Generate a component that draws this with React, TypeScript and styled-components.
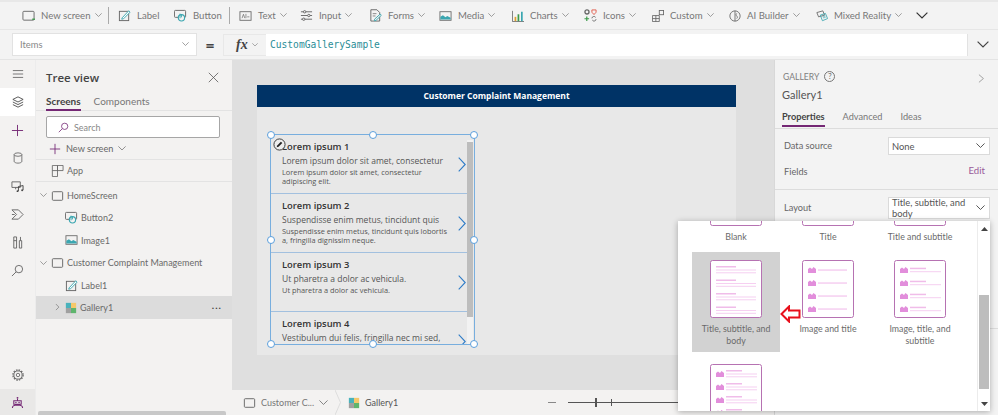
import React from "react";
import styled, { createGlobalStyle } from "styled-components";

const GlobalStyle = createGlobalStyle`
  html, body {
    margin: 0;
    padding: 0;
    background: #f3f2f1;
  }
  * {
    box-sizing: border-box;
  }
`;

const Icon = ({ size = 13, w, h, children }: { size?: number; w?: number; h?: number; children: React.ReactNode }) => (
  <svg width={w ?? size} height={h ?? size} viewBox="0 0 14 14" fill="none" strokeWidth="1" style={{ flex: "none", display: "block" }}>
    {children}
  </svg>
);

const GREY = "#666";
const TEAL = "#3aa6b0";

const Chevron = ({ size = 7, color = "#777" }: { size?: number; color?: string }) => (
  <svg width={size} height={size * 0.6} viewBox="0 0 10 6" fill="none" style={{ flex: "none", display: "block" }}>
    <path d="M.5.5 5 5 9.5.5" stroke={color} strokeWidth="1" />
  </svg>
);

const ScreenIcon = () => (
  <Icon w={13} h={12}>
    <rect x="1" y="2" width="12" height="10" rx="1" stroke={GREY} strokeWidth="1.1" />
  </Icon>
);
const NewScreenIcon = () => (
  <Icon>
    <rect x="1" y="2.5" width="12" height="9.5" rx="1" stroke={GREY} />
    <path d="M11 11h3" stroke="#3c9a4a" strokeWidth="1.4" />
  </Icon>
);
const LabelIcon = () => (
  <Icon>
    <rect x="1.5" y="2.5" width="10" height="10" stroke={GREY} />
    <path d="M4.5 9.5 11.5 2l1.5 1.4L6 10.5l-2 .5z" fill="#fff" stroke={TEAL} />
  </Icon>
);
const ButtonIcon = () => (
  <Icon>
    <rect x=".5" y="1.5" width="12" height="7.5" rx="1" stroke={GREY} />
    <circle cx="8" cy="9.5" r="3.4" fill="#f3f2f1" stroke={TEAL} strokeWidth="1.2" />
    <path d="M6.5 5v5M8 6v3" stroke={TEAL} />
  </Icon>
);
const TextIcon = () => (
  <Icon w={13} h={12}>
    <rect x=".5" y="2" width="13" height="10" stroke={GREY} />
    <path d="M3 9.5 4.6 5l1.6 4.5M7.5 9.5v-5M9 8h2.5" stroke={GREY} strokeWidth=".8" />
  </Icon>
);
const InputIcon = () => (
  <Icon>
    <path d="M1 3h12M1 7h12M1 11h12" stroke={GREY} />
    <circle cx="5" cy="3" r="1.3" fill="#f3f2f1" stroke={GREY} />
    <circle cx="9.5" cy="7" r="1.3" fill="#f3f2f1" stroke={GREY} />
    <circle cx="4" cy="11" r="1.3" fill="#f3f2f1" stroke={GREY} />
  </Icon>
);
const FormsIcon = () => (
  <Icon>
    <path d="M2 .8h6.5l3 3V13H2z" stroke={GREY} />
    <path d="M4 5h4M4 7.5h3" stroke={GREY} strokeWidth=".8" />
    <path d="m6 11 6-5.5 1.3 1.3L7.5 12.3l-1.7.3z" fill="#f3f2f1" stroke={TEAL} />
  </Icon>
);
const MediaIcon = () => (
  <Icon w={13} h={12}>
    <rect x=".5" y="2" width="13" height="10" stroke={GREY} />
    <path d="M1 11V8l3-2 3 2.5 2-1.5 4 2v2z" fill={TEAL} />
  </Icon>
);
const ChartsIcon = () => (
  <Icon w={12} h={12}>
    <path d="M.5 1v12.500H14" stroke={GREY} />
    <path d="M3 8h2v5H3z" fill="#e0a030" />
    <path d="M6.5 5h2v8h-2z" fill="#3c9a4a" />
    <path d="M10.5 2h2v11h-2z" fill={TEAL} />
  </Icon>
);
const IconsIcon = () => (
  <Icon>
    <circle cx="3.2" cy="3.2" r="2.2" stroke={GREY} strokeWidth="1.4" />
    <path d="M8.5 1h4.500v2.500L10.800 6 8.500 3.500z" stroke="#e25b4b" />
    <path d="M3 8v5M.5 10.500h5" stroke="#3c9a4a" strokeWidth="1.3" />
    <path d="M8.500 10a2.200 2.200 0 0 1 4-1M13 11a2.200 2.200 0 0 1-4 1" stroke={GREY} />
  </Icon>
);
const CustomIcon = () => (
  <Icon w={12} h={12}>
    <path d="M.5 6.500h8v7h-8zM4.500 6.500v7M.5 10h8" stroke={GREY} />
    <rect x="8.500" y=".5" width="5" height="5" stroke={GREY} />
  </Icon>
);
const AppIcon = () => (
  <Icon w={13} h={12}>
    <path d="M1 .5h6v13H1zM7 .5h6.500v6H7zM1 6.500h6" stroke={GREY} />
  </Icon>
);
const BrainIcon = () => (
  <Icon w={12} h={12}>
    <circle cx="7" cy="7" r="6" stroke={GREY} />
    <path d="M7 1v12M9 4c-1 1-1 2 0 3s1 2 0 3" stroke={GREY} />
  </Icon>
);
const MixedIcon = () => (
  <Icon w={12} h={12}>
    <path d="m1 3 7-2 2 5-7 2z" stroke={GREY} />
    <path d="m5 6 6-2 2.500 6-6 2.500z" stroke={TEAL} />
    <path d="M7.500 7l3-1 1 3-3 1z" fill={TEAL} opacity=".5" />
  </Icon>
);
const GalleryIcon = () => (
  <Icon w={12} h={12}>
    <rect x="1" y="1" width="6" height="6" fill="#49b2bc" />
    <rect x="7" y="1" width="6" height="6" fill="#f5c86a" />
    <rect x="1" y="7" width="6" height="6" fill="#a0a0a0" />
    <rect x="7" y="7" width="6" height="6" fill="#5fb56d" />
  </Icon>
);

const tools = [
  { name: "New screen", icon: <NewScreenIcon />, chev: true, width: 86, sep: true },
  { name: "Label", icon: <LabelIcon />, width: 56 },
  { name: "Button", icon: <ButtonIcon />, width: 55, sep: true },
  { name: "Text", icon: <TextIcon />, chev: true, width: 61 },
  { name: "Input", icon: <InputIcon />, chev: true, width: 69 },
  { name: "Forms", icon: <FormsIcon />, chev: true, width: 70 },
  { name: "Media", icon: <MediaIcon />, chev: true, width: 73 },
  { name: "Charts", icon: <ChartsIcon />, chev: true, width: 72 },
  { name: "Icons", icon: <IconsIcon />, chev: true, width: 68 },
  { name: "Custom", icon: <CustomIcon />, chev: true, width: 77 },
  { name: "AI Builder", icon: <BrainIcon />, chev: true, width: 87 },
  { name: "Mixed Reality", icon: <MixedIcon />, chev: true, width: 100 },
];

const treeRows = [
  { name: "HomeScreen", level: 0, icon: <ScreenIcon />, open: true },
  { name: "Button2", level: 1, icon: <ButtonIcon /> },
  { name: "Image1", level: 1, icon: <MediaIcon /> },
  { name: "Customer Complaint Management", level: 0, icon: <ScreenIcon />, open: true },
  { name: "Label1", level: 1, icon: <LabelIcon /> },
];

const galleryRows = [
  { title: "Lorem ipsum 1", sub: "Lorem ipsum dolor sit amet, consectetur", body: "Lorem ipsum dolor sit amet, consectetur adipiscing elit." },
  { title: "Lorem ipsum 2", sub: "Suspendisse enim metus, tincidunt quis", body: "Suspendisse enim metus, tincidunt quis lobortis a, fringilla dignissim neque." },
  { title: "Lorem ipsum 3", sub: "Ut pharetra a dolor ac vehicula.", body: "Ut pharetra a dolor ac vehicula." },
  { title: "Lorem ipsum 4", sub: "Vestibulum dui felis, fringilla nec mi sed,", body: "" },
];

const handles = [
  [0, 0], [50, 0], [100, 0],
  [0, 50], [100, 50],
  [0, 100], [50, 100], [100, 100],
];

const Page = styled.div`
  position: relative;
  width: 998px;
  height: 415px;
  overflow: hidden;
  background: #f3f2f1;
  border-top: 2px solid #e8e8e8;
  font-family: Lato, "Open Sans", sans-serif;
  color: #555;
`;

const Toolbar = styled.div`
  display: flex;
  align-items: center;
  height: 28px;
  padding-left: 22px;
  background: #f3f3f3;
  border-bottom: 1px solid #e6e6e6;
`;

const Tool = styled.div<{ $w: number }>`
  display: flex;
  align-items: center;
  gap: 6px;
  width: ${(p) => p.$w}px;
  flex: none;
  font-size: 9.6px;
  color: #777;
  white-space: nowrap;
`;

const ToolSep = styled.div`
  width: 1px;
  height: 17px;
  background: #aaa;
  margin-right: 9px;
  flex: none;
`;

const ToolChev = styled.span`
  margin-left: -2px;
`;

const FormulaBar = styled.div`
  display: flex;
  align-items: center;
  height: 30px;
  padding: 4px 0 4px 12px;
  background: #f3f3f3;
  border-bottom: 1px solid #e4e4e4;
`;

const PropSelect = styled.div`
  display: flex;
  align-items: center;
  justify-content: space-between;
  width: 185px;
  height: 23px;
  padding: 0 7px;
  background: #fff;
  border: 1px solid #e2e2e2;
  font-size: 9.4px;
  color: #888;
`;

const Equals = styled.div`
  width: 26px;
  text-align: center;
  font-family: "Open Sans", sans-serif;
  font-size: 15px;
  font-weight: 700;
  color: #444;
`;

const FxBox = styled.div`
  display: flex;
  align-items: center;
  gap: 4px;
  width: 43px;
  height: 22px;
  padding-left: 12px;
  font-family: "Liberation Serif", serif;
  font-style: italic;
  font-weight: 700;
  font-size: 14px;
  color: #444;
  border: 1px solid #e8e8e8;
  border-right: 0;
`;

const FormulaInput = styled.div`
  width: 702px;
  height: 22px;
  padding-left: 4px;
  background: #fff;
  border-right: 1px solid #e2e2e2;
  font-family: "DejaVu Sans Mono", monospace;
  font-size: 9.6px;
  line-height: 22px;
  color: #2a8d96;
`;

const FormulaChev = styled.div`
  margin-left: 9px;
`;

const Body = styled.div`
  display: grid;
  grid-template-columns: 35px 197px 542px 224px;
  height: 355px;
`;

const Rail = styled.nav`
  display: flex;
  flex-direction: column;
  background: #f3f2f1;
`;

const RailItem = styled.div<{ $active?: boolean; $dim?: boolean }>`
  display: flex;
  align-items: center;
  justify-content: center;
  height: ${(p) => (p.$dim ? 26 : 28)}px;
  flex: none;
  background: ${(p) => (p.$active ? "#fff" : p.$dim ? "#e9e8e7" : "transparent")};
`;

const RailSpacer = styled.div`
  flex: 1;
`;

const TreePanel = styled.aside`
  position: relative;
  display: flex;
  flex-direction: column;
  background: #f3f2f1;
  border-left: 1px solid #ececec;
`;

const TreeHead = styled.div`
  display: flex;
  align-items: center;
  justify-content: space-between;
  height: 34px;
  padding: 2px 13px 2px 10px;
  font-family: "Open Sans", sans-serif;
  font-size: 11.5px;
  font-weight: 600;
  color: #444;
`;

const Tabs = styled.div`
  display: flex;
  gap: 13px;
  height: 17px;
  padding-left: 10px;
  border-bottom: 1px solid #e3e3e3;
  font-size: 10px;
`;

const TabItem = styled.div<{ $active?: boolean }>`
  height: 17px;
  line-height: 14px;
  font-weight: ${(p) => (p.$active ? 700 : 400)};
  color: ${(p) => (p.$active ? "#444" : "#777")};
  border-bottom: ${(p) => (p.$active ? "2px solid #742774" : "0")};
`;

const SearchBox = styled.div`
  display: flex;
  align-items: center;
  gap: 5px;
  height: 22px;
  margin: 5px 12px 0 10px;
  padding-left: 11px;
  background: #fff;
  border: 1px solid #a6a6a6;
  border-radius: 2px;
  font-size: 9px;
  color: #888;
`;

const NewScreenRow = styled.div`
  display: flex;
  align-items: center;
  gap: 5px;
  height: 22px;
  padding-left: 13px;
  border-bottom: 1px solid #e3e3e3;
  font-size: 9.2px;
  color: #666;
`;

const TreeRow = styled.div<{ $level?: number; $selected?: boolean; $line?: boolean }>`
  display: flex;
  align-items: center;
  gap: 3px;
  height: 22.4px;
  flex: none;
  padding-left: ${(p) => 15 + (p.$level ?? 0) * 14}px;
  margin-bottom: ${(p) => (p.$line ? 2 : 0)}px;
  font-size: 9px;
  color: #6a6a6a;
  white-space: nowrap;
  background: ${(p) => (p.$selected ? "#dcdcdc" : "transparent")};
  border-bottom: ${(p) => (p.$line ? "1px solid #e3e3e3" : "0")};
`;

const TreeCaret = styled.span<{ $side?: boolean }>`
  width: 7px;
  margin: 0 1px 0 -11px;
  transform: ${(p) => (p.$side ? "rotate(-90deg)" : "none")};
`;

const MoreDots = styled.span`
  margin-left: auto;
  margin-right: 10px;
  font-size: 10px;
  font-weight: 700;
  letter-spacing: 1px;
  color: #444;
  line-height: 6px;
  padding-bottom: 5px;
`;

const HScroll = styled.div`
  position: absolute;
  left: 2px;
  bottom: 0;
  width: 188px;
  height: 4px;
  background: #c8c8c8;
  border-radius: 2px 2px 0 0;
`;

const Canvas = styled.main`
  display: flex;
  flex-direction: column;
  background: #dfdfdf;
`;

const CanvasArea = styled.div`
  flex: 1;
  padding: 25px 38px 0 25px;
`;

const AppScreen = styled.div`
  height: 270px;
  font-family: "Open Sans", sans-serif;
  background: #e8e8e8;
`;

const ScreenHeader = styled.div`
  height: 22px;
  line-height: 22px;
  text-align: center;
  background: #003366;
  color: #fff;
  font-size: 8.5px;
  font-weight: 700;
`;

const Gallery = styled.div`
  position: relative;
  width: 205px;
  height: 211px;
  margin: 27px 0 0 13px;
  border: 1px solid #78aede;
`;

const GalleryClip = styled.div`
  height: 100%;
  overflow: hidden;
`;

const GalleryRow = styled.div`
  position: relative;
  height: 59px;
  padding: 5px 26px 0 11px;
  border-bottom: 1px solid #a2c0df;
  margin-right: 5px;
`;

const RowTitle = styled.div`
  font-size: 9.4px;
  line-height: 14px;
  font-weight: 600;
  color: #333;
  white-space: nowrap;
`;

const RowSub = styled.div`
  font-size: 8.5px;
  line-height: 13px;
  color: #555;
  white-space: nowrap;
`;

const RowBody = styled.div`
  margin-top: 1px;
  margin-right: -9px;
  font-size: 7.4px;
  line-height: 9px;
  color: #555;
`;

const RowArrow = styled.svg`
  position: absolute;
  right: 3px;
  top: 22px;
`;

const GalleryTrack = styled.div`
  position: absolute;
  top: 5px;
  right: 1px;
  width: 6px;
  height: 204px;
  background: #f2f2f2;
`;

const GalleryThumb = styled.div`
  height: 175px;
  margin-top: 2px;
  background: #bdbdbd;
`;

const Handle = styled.span`
  position: absolute;
  width: 8px;
  height: 8px;
  margin: -4px 0 0 -4px;
  background: #fff;
  border: 1px solid #5c9fdc;
  border-radius: 50%;
`;

const EditBadge = styled.div`
  position: absolute;
  left: 2px;
  top: 3px;
`;

const StatusBar = styled.footer`
  display: flex;
  align-items: center;
  height: 25px;
  padding-left: 11px;
  background: #f3f2f1;
  font-size: 9px;
  color: #777;
  white-space: nowrap;
`;

const Crumb = styled.div<{ $w: number; $dark?: boolean }>`
  display: flex;
  align-items: center;
  gap: 5px;
  width: ${(p) => p.$w}px;
  flex: none;
  color: ${(p) => (p.$dark ? "#555" : "#777")};
`;

const CrumbDivider = styled.svg`
  flex: none;
  margin-right: 7px;
`;

const ZoomMinus = styled.div`
  width: 8px;
  height: 1px;
  margin: 0 12px 0 154px;
  background: #888;
  flex: none;
`;

const ZoomTrack = styled.div`
  position: relative;
  flex: 1;
  height: 1px;
  background: #555;
`;

const ZoomMark = styled.span<{ $at: number; $tall?: boolean }>`
  position: absolute;
  left: ${(p) => p.$at}px;
  top: ${(p) => (p.$tall ? -4 : -3)}px;
  width: ${(p) => (p.$tall ? 2 : 1)}px;
  height: ${(p) => (p.$tall ? 9 : 7)}px;
  background: #555;
`;

const RightPanel = styled.aside`
  display: flex;
  flex-direction: column;
  background: #f3f3f3;
  border-left: 1px solid #d8d8d8;
`;

const PanelKind = styled.div`
  display: flex;
  align-items: center;
  gap: 5px;
  height: 24px;
  padding: 9px 12px 0 8px;
  font-size: 8.6px;
  color: #808080;
`;

const HelpMark = styled.span`
  display: flex;
  align-items: center;
  justify-content: center;
  width: 11px;
  height: 11px;
  border: 1px solid #777;
  border-radius: 50%;
  font-size: 7.5px;
  color: #666;
`;

const PanelChev = styled.span`
  margin-left: auto;
  margin-top: 4px;
`;

const PanelName = styled.div`
  height: 22px;
  line-height: 22px;
  padding: 0 7px;
  font-size: 11px;
  color: #555;
`;

const PanelTabs = styled.div`
  display: flex;
  gap: 18px;
  height: 23px;
  padding: 4px 0 0 7px;
  border-bottom: 1px solid #dcdcdc;
  font-size: 9.2px;
`;

const Section = styled.div<{ $line?: boolean }>`
  display: grid;
  grid-template-columns: 104px 102px;
  align-items: center;
  padding-left: 9px;
  border-bottom: ${(p) => (p.$line ? "1px solid #dcdcdc" : "0")};
  font-size: 9.2px;
  color: #666;
`;

const FieldLabel = styled.div<{ $h: number }>`
  height: ${(p) => p.$h}px;
  line-height: ${(p) => p.$h}px;
`;

const FieldSelect = styled.div<{ $tall?: boolean }>`
  display: flex;
  align-items: center;
  justify-content: space-between;
  height: ${(p) => (p.$tall ? 22 : 18)}px;
  padding: 0 4px 0 3px;
  background: #fff;
  border: 1px solid #dadada;
  font-size: 9.4px;
  line-height: 11px;
  color: #555;

  span {
    width: 76px;
  }
`;

const EditLink = styled.div`
  padding-right: 5px;
  text-align: right;
  margin-top: -3px;
  font-size: 9.6px;
  color: #9a5a9a;
`;

const LayoutPopup = styled.div`
  position: absolute;
  left: 678px;
  top: 219px;
  width: 312px;
  height: 190px;
  overflow: hidden;
  background: #fff;
  box-shadow: 0 1px 6px rgba(0, 0, 0, 0.3);
`;

const LayoutGrid = styled.div`
  display: grid;
  grid-template-columns: 88px 96px 88px;
  grid-template-rows: 92px 104px 100px;
  margin: -61px 0 0 14px;
`;

const LayoutCell = styled.div<{ $selected?: boolean }>`
  display: flex;
  flex-direction: column;
  align-items: center;
  height: 100px;
  padding-top: 8px;
  text-align: center;
  font-size: 8.8px;
  line-height: 11.5px;
  color: #6a6a6a;
  background: ${(p) => (p.$selected ? "#d2d2d2" : "transparent")};
`;

const LayoutName = styled.div`
  margin-top: 4px;
  padding: 0 6px;
`;

const PopupScroll = styled.div`
  position: absolute;
  top: 0;
  right: 0;
  width: 13px;
  height: 100%;
  border-left: 1px solid #ececec;
`;

const PopupThumb = styled.div`
  position: absolute;
  left: 1px;
  right: 1px;
  top: 74px;
  height: 94px;
  background: #bdbdbd;
`;

const ScrollArrow = styled.svg<{ $down?: boolean }>`
  position: absolute;
  left: 3px;
  ${(p) => (p.$down ? "bottom: 5px;" : "top: 6px;")}
`;

const RedArrow = styled.svg`
  position: absolute;
  left: 102px;
  top: 84px;
`;

const PINK = "#f6cff1";
const THUMB_EDGE = "#b672b2";

const LayoutThumb = ({ image, title, sub, body }: { image?: boolean; title?: boolean; sub?: boolean; body?: boolean }) => {
  const rows = [0, 1, 2, 3];
  const pitch = body && !image ? 13.5 : 13;
  const left = image ? 16 : 6;
  const titleDrop = body ? 0 : sub ? 1.7 : 3.3;
  return (
    <svg width="52" height="59" viewBox="0 0 52 59" style={{ flex: "none", display: "block" }}>
      <rect x=".5" y=".5" width="51" height="57" rx="2" fill="#fff" stroke={THUMB_EDGE} />
      {rows.map((i) => {
        const y = 6 + i * pitch;
        return (
          <g key={i}>
            {image && <path d={`M6 ${y + 7}v-4l2-1.500 2 1.500 1.500-2 2.500 2v4z`} fill="#e28edb" />}
            {title && <rect x={left} y={y + titleDrop} width={sub ? (image ? 16 : 20) : 29} height="1.500" fill={sub ? "#f0bce9" : PINK} />}
            {sub && <rect x={left} y={y + titleDrop + 3.5} width={image ? 31 : 40} height="1" fill={PINK} />}
            {body && <rect x={left} y={y + 6.3} width={image ? 31 : 40} height="1" fill={PINK} />}
          </g>
        );
      })}
    </svg>
  );
};

const layouts = [
  { name: "Blank", thumb: <LayoutThumb /> },
  { name: "Title", thumb: <LayoutThumb title /> },
  { name: "Title and subtitle", thumb: <LayoutThumb title sub /> },
  { name: "Title, subtitle, and body", thumb: <LayoutThumb title sub body />, selected: true },
  { name: "Image and title", thumb: <LayoutThumb image title /> },
  { name: "Image, title, and subtitle", thumb: <LayoutThumb image title sub /> },
  { name: "", thumb: <LayoutThumb image title sub body /> },
];

export default function App() {
  return (
    <Page>
      <GlobalStyle />
      <Toolbar>
        {tools.map((t) => (
          <React.Fragment key={t.name}>
            <Tool $w={t.width}>
              {t.icon}
              {t.name}
              {t.chev && (
                <ToolChev>
                  <Chevron />
                </ToolChev>
              )}
            </Tool>
            {t.sep && <ToolSep />}
          </React.Fragment>
        ))}
        <Chevron size={12} color="#333" />
      </Toolbar>

      <FormulaBar>
        <PropSelect>
          Items
          <Chevron />
        </PropSelect>
        <Equals>=</Equals>
        <FxBox>
          fx
          <Chevron size={6} />
        </FxBox>
        <FormulaInput>CustomGallerySample</FormulaInput>
        <FormulaChev>
          <Chevron size={12} color="#444" />
        </FormulaChev>
      </FormulaBar>

      <Body>
        <Rail>
          <RailItem>
            <Icon size={12}>
              <path d="M1 3h12M1 7h12M1 11h12" stroke={GREY} />
            </Icon>
          </RailItem>
          <RailItem $active>
            <Icon size={12}>
              <path d="M7 1 13 4 7 7 1 4zM1 7l6 3 6-3M1 10l6 3 6-3" stroke="#444" />
            </Icon>
          </RailItem>
          <RailItem>
            <Icon size={13}>
              <path d="M7 1v12M1 7h12" stroke="#742774" />
            </Icon>
          </RailItem>
          <RailItem>
            <Icon size={12}>
              <ellipse cx="7" cy="3" rx="4.500" ry="2" stroke={GREY} />
              <path d="M2.500 3v8c0 1 2 2 4.500 2s4.500-1 4.500-2V3" stroke={GREY} />
            </Icon>
          </RailItem>
          <RailItem>
            <Icon size={13}>
              <path d="M1 2h9v6H1zM5 8v2" stroke={GREY} />
              <path d="M8 12V7l5-1v5" stroke="#444" />
              <circle cx="7" cy="12" r="1" fill="#444" />
              <circle cx="12" cy="11" r="1" fill="#444" />
            </Icon>
          </RailItem>
          <RailItem>
            <Icon size={13}>
              <path d="M1 2h7l5 5-5 5H1l5-5zM1 7h3" stroke={GREY} />
            </Icon>
          </RailItem>
          <RailItem>
            <Icon size={13}>
              <path d="M3 1v12h3V1zM9 5h2.500v8H9zM10.200 1v4M3 5h3" stroke={GREY} />
            </Icon>
          </RailItem>
          <RailItem>
            <Icon size={13}>
              <circle cx="8.500" cy="5.500" r="4" stroke={GREY} />
              <path d="M5.500 8.500 1 13" stroke={GREY} />
            </Icon>
          </RailItem>
          <RailSpacer />
          <RailItem>
            <Icon size={12}>
              <circle cx="7" cy="7" r="2" stroke={GREY} />
              <circle cx="7" cy="7" r="4.800" stroke={GREY} strokeWidth="1.100" />
              <circle cx="7" cy="7" r="6" stroke={GREY} strokeWidth="1.400" strokeDasharray="1.800 1.340" />
            </Icon>
          </RailItem>
          <RailItem $dim>
            <Icon size={13}>
              <circle cx="7" cy="2" r="1" fill="#742774" />
              <path d="M7 3v1.500M3 5h8v4H3zM1.500 13c0-2 2-3 3-3h5c1 0 3 1 3 3" stroke="#742774" strokeWidth="1.100" />
              <circle cx="5.300" cy="7" r=".8" fill="#742774" />
              <circle cx="8.700" cy="7" r=".8" fill="#742774" />
            </Icon>
          </RailItem>
        </Rail>

        <TreePanel>
          <TreeHead>
            Tree view
            <Icon size={11}>
              <path d="m1 1 12 12M13 1 1 13" stroke="#555" />
            </Icon>
          </TreeHead>
          <Tabs>
            <TabItem $active>Screens</TabItem>
            <TabItem>Components</TabItem>
          </Tabs>
          <SearchBox>
            <Icon size={11}>
              <circle cx="8.500" cy="5.500" r="4" stroke="#742774" />
              <path d="M5.500 8.500 1 13" stroke="#742774" />
            </Icon>
            Search
          </SearchBox>
          <NewScreenRow>
            <Icon size={12}>
              <path d="M7 1v12M1 7h12" stroke="#742774" />
            </Icon>
            New screen
            <Chevron size={8} />
          </NewScreenRow>
          <TreeRow $line>
            <AppIcon />
            App
          </TreeRow>
          {treeRows.map((r) => (
            <TreeRow key={r.name} $level={r.level}>
              {r.open && (
                <TreeCaret>
                  <Chevron />
                </TreeCaret>
              )}
              {r.icon}
              {r.name}
            </TreeRow>
          ))}
          <TreeRow $level={1} $selected>
            <TreeCaret $side>
              <Chevron />
            </TreeCaret>
            <GalleryIcon />
            Gallery1
            <MoreDots>...</MoreDots>
          </TreeRow>
          <HScroll />
        </TreePanel>

        <Canvas>
          <CanvasArea>
            <AppScreen>
              <ScreenHeader>Customer Complaint Management</ScreenHeader>
              <Gallery>
                <GalleryClip>
                  {galleryRows.map((r) => (
                    <GalleryRow key={r.title}>
                      <RowTitle>{r.title}</RowTitle>
                      <RowSub>{r.sub}</RowSub>
                      <RowBody>{r.body}</RowBody>
                      <RowArrow width="8" height="15" viewBox="0 0 8 15" fill="none">
                        <path d="m.7.7 6.500 6.800L.7 14.300" stroke="#2f7cc7" strokeWidth="1.100" />
                      </RowArrow>
                    </GalleryRow>
                  ))}
                </GalleryClip>
                <GalleryTrack>
                  <GalleryThumb />
                </GalleryTrack>
                <EditBadge>
                  <Icon size={13}>
                    <circle cx="7" cy="7" r="6" stroke="#333" fill="#eee" />
                    <path d="m4 10 .5-2L8.500 4l1.500 1.500L6 9.500z" fill="#222" />
                  </Icon>
                </EditBadge>
                {handles.map(([x, y]) => (
                  <Handle key={`${x}-${y}`} style={{ left: `${x}%`, top: `${y}%` }} />
                ))}
              </Gallery>
            </AppScreen>
          </CanvasArea>
          <StatusBar>
            <Crumb $w={92}>
              <ScreenIcon />
              Customer C...
              <Chevron size={9} />
            </Crumb>
            <CrumbDivider width="6" height="25" viewBox="0 0 6 25" fill="none">
              <path d="m0 0 5.500 12.500L0 25" stroke="#ddd" />
            </CrumbDivider>
            <Crumb $w={46} $dark>
              <GalleryIcon />
              Gallery1
            </Crumb>
            <ZoomMinus />
            <ZoomTrack>
              <ZoomMark $at={27} $tall />
              <ZoomMark $at={43} />
            </ZoomTrack>
          </StatusBar>
        </Canvas>

        <RightPanel>
          <PanelKind>
            GALLERY
            <HelpMark>?</HelpMark>
            <PanelChev>
              <Icon w={9} h={13}>
                <path d="m3 1 7 6-7 6" stroke="#777" />
              </Icon>
            </PanelChev>
          </PanelKind>
          <PanelName>Gallery1</PanelName>
          <PanelTabs>
            <TabItem $active>Properties</TabItem>
            <TabItem>Advanced</TabItem>
            <TabItem>Ideas</TabItem>
          </PanelTabs>
          <Section $line>
            <FieldLabel $h={34}>Data source</FieldLabel>
            <FieldSelect>
              None
              <Chevron size={9} color="#444" />
            </FieldSelect>
            <FieldLabel $h={18}>Fields</FieldLabel>
            <EditLink>Edit</EditLink>
            <FieldLabel $h={8} />
          </Section>
          <Section $line>
            <FieldLabel $h={36}>Layout</FieldLabel>
            <FieldSelect $tall>
              <span>Title, subtitle, and body</span>
              <Chevron size={9} color="#444" />
            </FieldSelect>
            <FieldLabel $h={102} />
          </Section>
        </RightPanel>
      </Body>

      <LayoutPopup>
        <LayoutGrid>
          {layouts.map((l, i) => (
            <LayoutCell key={i} $selected={l.selected}>
              {l.thumb}
              {l.name && <LayoutName>{l.name}</LayoutName>}
            </LayoutCell>
          ))}
        </LayoutGrid>
        <RedArrow width="21" height="18" viewBox="0 0 21 18" fill="none">
          <path d="M1.500 9 9 1.500V5.500h10.500v7H9v4z" fill="#fff" stroke="#e8101c" strokeWidth="2" />
        </RedArrow>
        <PopupScroll>
          <ScrollArrow width="7" height="4" viewBox="0 0 7 4">
            <path d="M0 4 3.500 0 7 4z" fill="#444" />
          </ScrollArrow>
          <PopupThumb />
          <ScrollArrow $down width="7" height="4" viewBox="0 0 7 4">
            <path d="M0 0h7L3.500 4z" fill="#444" />
          </ScrollArrow>
        </PopupScroll>
      </LayoutPopup>
    </Page>
  );
}
